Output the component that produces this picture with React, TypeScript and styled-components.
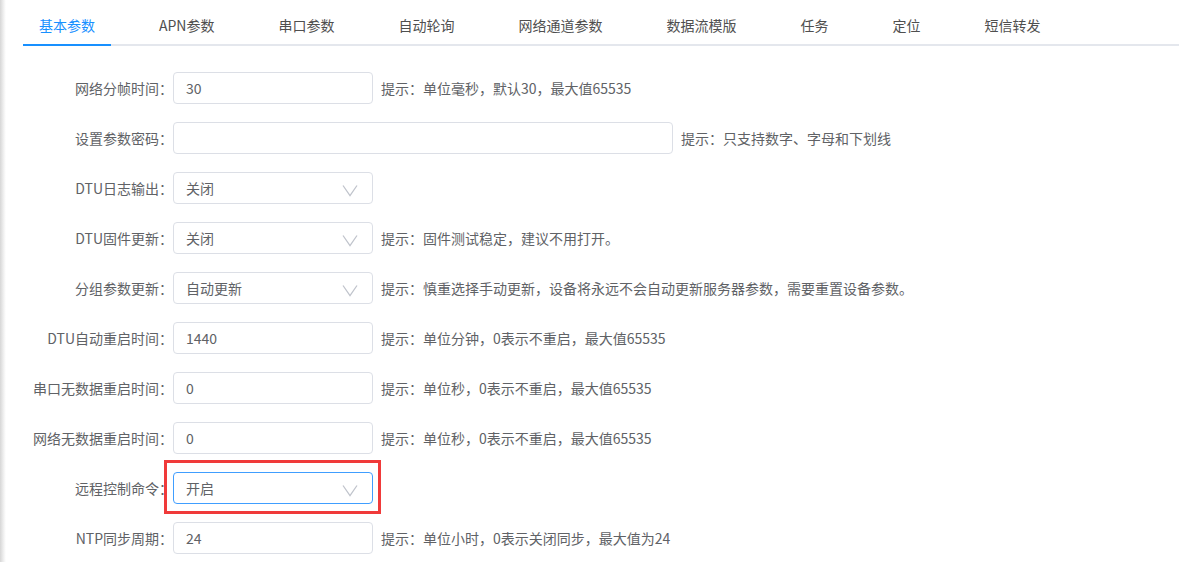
import React from "react";
import styled, { createGlobalStyle } from "styled-components";

const GlobalStyle = createGlobalStyle`
  html, body { margin: 0; padding: 0; background: #fff; overflow: hidden; }
  body { font-family: "Noto Sans CJK SC", "Noto Sans", sans-serif; color: #606266; }
  * { box-sizing: border-box; }
`;

const Page = styled.div`
  display: flex;
  width: 1179px;
  height: 562px;
`;

const EdgeShadow = styled.div`
  width: 6px;
  flex: none;
  background: linear-gradient(to right, #d6d6d6, #ececec 50%, #fafafa 85%, #fff);
`;

const Main = styled.div`
  flex: 1;
  padding-left: 17px;
  display: flex;
  flex-direction: column;
`;

const TabBar = styled.div`
  display: flex;
  gap: 32px;
  border-bottom: 2px solid #e4e7ed;
  height: 46px;
`;

const Tab = styled.div<{ $active?: boolean }>`
  height: 46px;
  padding: 6px 16px 0;
  line-height: 38px;
  font-size: 14px;
  color: ${(p) => (p.$active ? "#1890ff" : "#4f4f4f")};
  border-bottom: 2px solid ${(p) => (p.$active ? "#1890ff" : "transparent")};
  white-space: nowrap;
  cursor: pointer;
`;

const Form = styled.div`
  display: flex;
  flex-direction: column;
  gap: 18px;
  padding-top: 26px;
`;

const Row = styled.div`
  display: flex;
  align-items: center;
  height: 32px;
`;

const Label = styled.label`
  width: 150px;
  flex: none;
  text-align: right;
  font-size: 14px;
  color: #606266;
  white-space: nowrap;
`;

const Field = styled.div`
  position: relative;
  flex: none;
`;

const TextInput = styled.input<{ $wide?: boolean }>`
  display: block;
  width: ${(p) => (p.$wide ? "500px" : "200px")};
  height: 32px;
  border: 1px solid #dcdfe6;
  border-radius: 4px;
  padding: 0 12px;
  font-family: "Noto Sans CJK SC", "Noto Sans", sans-serif;
  font-size: 14px;
  color: #606266;
  outline: none;
  background: #fff;
`;

const SelectBox = styled.div<{ $focused?: boolean }>`
  display: flex;
  align-items: center;
  justify-content: space-between;
  width: 200px;
  height: 32px;
  border: 1px solid ${(p) => (p.$focused ? "#409eff" : "#dcdfe6")};
  border-radius: 4px;
  padding: 0 14px 0 12px;
  font-size: 14px;
  color: #606266;
  background: #fff;
`;

const ArrowWrap = styled.span`
  display: flex;
  margin-top: 5px;
`;

const Highlight = styled.div`
  position: absolute;
  top: -12px;
  left: -9px;
  right: -8px;
  bottom: -10px;
  border: 3px solid #f03a3a;
  pointer-events: none;
`;

const Hint = styled.span`
  margin-left: 8px;
  font-size: 14px;
  color: #606266;
  white-space: nowrap;
`;

const Chevron = () => (
  <ArrowWrap>
    <svg width="16" height="13" viewBox="0 0 16 13" fill="none">
      <polyline points="1,1.5 8,11.5 15,1.5" stroke="#c0c4cc" strokeWidth="1.3" />
    </svg>
  </ArrowWrap>
);

type RowDef = {
  label: string;
  kind: "input" | "wide" | "select";
  value: string;
  hint?: string;
  highlight?: boolean;
};

const tabs = ["基本参数", "APN参数", "串口参数", "自动轮询", "网络通道参数", "数据流模版", "任务", "定位", "短信转发"];

const rows: RowDef[] = [
  { label: "网络分帧时间：", kind: "input", value: "30", hint: "提示：单位毫秒，默认30，最大值65535" },
  { label: "设置参数密码：", kind: "wide", value: "", hint: "提示：只支持数字、字母和下划线" },
  { label: "DTU日志输出：", kind: "select", value: "关闭" },
  { label: "DTU固件更新：", kind: "select", value: "关闭", hint: "提示：固件测试稳定，建议不用打开。" },
  {
    label: "分组参数更新：",
    kind: "select",
    value: "自动更新",
    hint: "提示：慎重选择手动更新，设备将永远不会自动更新服务器参数，需要重置设备参数。",
  },
  { label: "DTU自动重启时间：", kind: "input", value: "1440", hint: "提示：单位分钟，0表示不重启，最大值65535" },
  { label: "串口无数据重启时间：", kind: "input", value: "0", hint: "提示：单位秒，0表示不重启，最大值65535" },
  { label: "网络无数据重启时间：", kind: "input", value: "0", hint: "提示：单位秒，0表示不重启，最大值65535" },
  { label: "远程控制命令：", kind: "select", value: "开启", highlight: true },
  { label: "NTP同步周期：", kind: "input", value: "24", hint: "提示：单位小时，0表示关闭同步，最大值为24" },
];

export default function App() {
  return (
    <>
      <GlobalStyle />
      <Page>
        <EdgeShadow />
        <Main>
          <TabBar>
            {tabs.map((t, i) => (
              <Tab key={t} $active={i === 0}>
                {t}
              </Tab>
            ))}
          </TabBar>
          <Form>
            {rows.map((r) => (
              <Row key={r.label}>
                <Label>{r.label}</Label>
                <Field>
                  {r.kind === "select" ? (
                    <SelectBox $focused={r.highlight}>
                      <span>{r.value}</span>
                      <Chevron />
                    </SelectBox>
                  ) : (
                    <TextInput $wide={r.kind === "wide"} defaultValue={r.value} />
                  )}
                  {r.highlight && <Highlight />}
                </Field>
                {r.hint && <Hint>{r.hint}</Hint>}
              </Row>
            ))}
          </Form>
        </Main>
      </Page>
    </>
  );
}
